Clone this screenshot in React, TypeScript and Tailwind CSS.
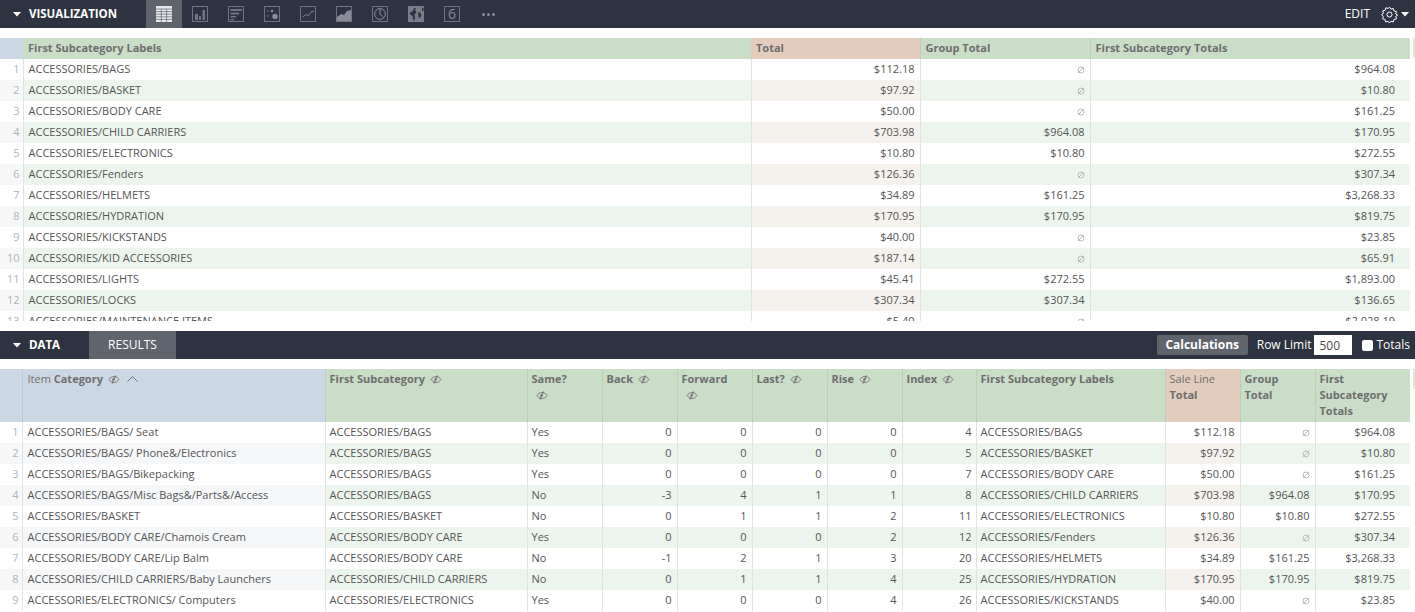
import React from "react";

const N = "∅";
const topRows: string[][] = [
  ["ACCESSORIES/BAGS", "$112.18", N, "$964.08"],
  ["ACCESSORIES/BASKET", "$97.92", N, "$10.80"],
  ["ACCESSORIES/BODY CARE", "$50.00", N, "$161.25"],
  ["ACCESSORIES/CHILD CARRIERS", "$703.98", "$964.08", "$170.95"],
  ["ACCESSORIES/ELECTRONICS", "$10.80", "$10.80", "$272.55"],
  ["ACCESSORIES/Fenders", "$126.36", N, "$307.34"],
  ["ACCESSORIES/HELMETS", "$34.89", "$161.25", "$3,268.33"],
  ["ACCESSORIES/HYDRATION", "$170.95", "$170.95", "$819.75"],
  ["ACCESSORIES/KICKSTANDS", "$40.00", N, "$23.85"],
  ["ACCESSORIES/KID ACCESSORIES", "$187.14", N, "$65.91"],
  ["ACCESSORIES/LIGHTS", "$45.41", "$272.55", "$1,893.00"],
  ["ACCESSORIES/LOCKS", "$307.34", "$307.34", "$136.65"],
  ["ACCESSORIES/MAINTENANCE ITEMS", "$5.40", N, "$2,028.19"],
];

const bottomRows: string[][] = [
  ["ACCESSORIES/BAGS/ Seat", "ACCESSORIES/BAGS", "Yes", "0", "0", "0", "0", "4", "ACCESSORIES/BAGS", "$112.18", N, "$964.08"],
  ["ACCESSORIES/BAGS/ Phone&/Electronics", "ACCESSORIES/BAGS", "Yes", "0", "0", "0", "0", "5", "ACCESSORIES/BASKET", "$97.92", N, "$10.80"],
  ["ACCESSORIES/BAGS/Bikepacking", "ACCESSORIES/BAGS", "Yes", "0", "0", "0", "0", "7", "ACCESSORIES/BODY CARE", "$50.00", N, "$161.25"],
  ["ACCESSORIES/BAGS/Misc Bags&/Parts&/Access", "ACCESSORIES/BAGS", "No", "-3", "4", "1", "1", "8", "ACCESSORIES/CHILD CARRIERS", "$703.98", "$964.08", "$170.95"],
  ["ACCESSORIES/BASKET", "ACCESSORIES/BASKET", "No", "0", "1", "1", "2", "11", "ACCESSORIES/ELECTRONICS", "$10.80", "$10.80", "$272.55"],
  ["ACCESSORIES/BODY CARE/Chamois Cream", "ACCESSORIES/BODY CARE", "Yes", "0", "0", "0", "2", "12", "ACCESSORIES/Fenders", "$126.36", N, "$307.34"],
  ["ACCESSORIES/BODY CARE/Lip Balm", "ACCESSORIES/BODY CARE", "No", "-1", "2", "1", "3", "20", "ACCESSORIES/HELMETS", "$34.89", "$161.25", "$3,268.33"],
  ["ACCESSORIES/CHILD CARRIERS/Baby Launchers", "ACCESSORIES/CHILD CARRIERS", "No", "0", "1", "1", "4", "25", "ACCESSORIES/HYDRATION", "$170.95", "$170.95", "$819.75"],
  ["ACCESSORIES/ELECTRONICS/ Computers", "ACCESSORIES/ELECTRONICS", "Yes", "0", "0", "0", "4", "26", "ACCESSORIES/KICKSTANDS", "$40.00", N, "$23.85"],
];

function NullMark() {
  return (
    <svg width="8" height="8" viewBox="0 0 8 8" className="inline-block align-[-0.5px]" fill="none" stroke="#b5b5b5" strokeWidth="0.9">
      <circle cx="4" cy="4" r="3" />
      <path d="M1.2 6.8 6.8 1.2" />
    </svg>
  );
}

function EyeOff() {
  return (
    <svg width="12" height="9" viewBox="0 0 12 9" className="inline-block ml-[5px] align-[-0.5px]" fill="none" stroke="#777" strokeWidth="0.9">
      <path d="M0.8 4.5C2.4 2.4 4 1.5 6 1.5s3.6.9 5.2 3C9.6 6.6 8 7.5 6 7.5S2.4 6.6.8 4.5Z" />
      <path d="M7.6 0.6 4 8.4" strokeWidth="1.2" />
      <circle cx="5.4" cy="4.4" r="1.2" fill="#777" stroke="none" />
    </svg>
  );
}

function Caret() {
  return (
    <svg width="8" height="5" viewBox="0 0 8 5" className="shrink-0">
      <path d="M0 0h8L4 4.6Z" fill="#fff" />
    </svg>
  );
}

function Cell({ v, right, cls }: { v: string; right?: boolean; cls?: string }) {
  return (
    <td className={`h-[21px] p-0 px-[4px] align-top border-r border-[#dfe3e0] whitespace-nowrap overflow-hidden leading-[20px] ${right ? "text-right pr-[5px]" : "text-left"} ${cls ?? ""}`}>
      {v === N ? <NullMark /> : v}
    </td>
  );
}

const stroke = "#6f737c";
function VisIcons() {
  const box = "w-[16px] h-[16px]";
  return (
    <div className="flex h-full items-center text-[0px]">
      <div className="w-[36px] h-[28px] bg-[#60646d] flex items-center justify-center">
        <svg className={box} viewBox="0 0 16 16">
          <rect width="16" height="16" fill="#e8e9eb" />
          <path d="M0 3h16M0 5.6h16M0 8.2h16M0 10.8h16M0 13.4h16M5.3 3v13M10.6 3v13" stroke="#60646d" strokeWidth="0.7" />
        </svg>
      </div>
      <div className="w-[36px] flex justify-center">
        <svg className={box} viewBox="0 0 16 16" fill="none">
          <rect x="0.5" y="0.5" width="15" height="15" stroke={stroke} />
          <path d="M3 8h3v6H3zM7 10h2v4H7zM10.5 4H13v10h-2.5z" fill="#70747d" />
        </svg>
      </div>
      <div className="w-[36px] flex justify-center">
        <svg className={box} viewBox="0 0 16 16" fill="none">
          <rect x="0.5" y="0.5" width="15" height="15" stroke={stroke} />
          <path d="M2.5 3H14v2H2.5zM2.5 6.5H11v2H2.5zM2.5 10H8v1.6H2.5zM2.5 13H6v1.5H2.5z" fill="#70747d" />
        </svg>
      </div>
      <div className="w-[36px] flex justify-center">
        <svg className={box} viewBox="0 0 16 16" fill="none">
          <rect x="0.5" y="0.5" width="15" height="15" stroke={stroke} />
          <circle cx="11" cy="10.5" r="2.7" fill="#8a8d95" />
          <circle cx="8" cy="5" r="1.3" fill="#8a8d95" />
          <circle cx="4" cy="5" r="0.7" fill="#8a8d95" />
          <circle cx="4" cy="10" r="0.7" fill="#8a8d95" />
        </svg>
      </div>
      <div className="w-[36px] flex justify-center">
        <svg className={box} viewBox="0 0 16 16" fill="none">
          <rect x="0.5" y="0.5" width="15" height="15" stroke={stroke} />
          <path d="M2.5 11 6 8.5 8.5 9.5 11 6l3-1" stroke="#7c8089" />
        </svg>
      </div>
      <div className="w-[36px] flex justify-center">
        <svg className={box} viewBox="0 0 16 16" fill="none">
          <rect x="0.5" y="0.5" width="15" height="15" stroke={stroke} />
          <path d="M1 15v-4l4-3 3 1 3-4 4-1v11Z" fill="#8a8d95" />
        </svg>
      </div>
      <div className="w-[36px] flex justify-center">
        <svg className={box} viewBox="0 0 16 16" fill="none">
          <rect x="0.5" y="0.5" width="15" height="15" stroke={stroke} />
          <circle cx="8" cy="8" r="5.4" stroke="#8a8d95" />
          <path d="M8 2.6V8l3.8 3.8" stroke="#8a8d95" />
        </svg>
      </div>
      <div className="w-[36px] flex justify-center">
        <svg className={box} viewBox="0 0 16 16">
          <rect width="16" height="16" fill="#7a7d85" />
          <path d="M6 2h2l-1 2 1.5 2L6.5 8.5 7 13l-1.5 2L4.5 10 1.5 7.5 3 6l2-1ZM10 6.5h2l1.5 2.5-1 2-1 1.5-1-2ZM14 1.5l1.5.5v3l-1.5.5Z" fill="#2d3340" />
        </svg>
      </div>
      <div className="w-[36px] flex justify-center">
        <div className="w-[16px] h-[16px] border border-[#6f737c] text-[14px] leading-[14px] text-center text-[#868a92] font-normal">6</div>
      </div>
      <div className="w-[36px] flex justify-center gap-[2px]">
        <span className="w-[3px] h-[3px] rounded-full bg-[#8a8d95]" />
        <span className="w-[3px] h-[3px] rounded-full bg-[#8a8d95]" />
        <span className="w-[3px] h-[3px] rounded-full bg-[#8a8d95]" />
      </div>
    </div>
  );
}

function GearIcon() {
  return (
    <svg width="17" height="17" viewBox="0 0 24 24" fill="none" stroke="#fff" strokeWidth="1.4" strokeLinejoin="round">
      <path d="M12 1.5l2 3 3.4-1 .9 3.5 3.5.9-1 3.4 2.7 1.7-2.7 1.7 1 3.4-3.5.9-.9 3.5-3.4-1-2 2.5-2-2.5-3.4 1-.9-3.5-3.5-.9 1-3.4L.7 12l2.7-1.7-1-3.4 3.5-.9.9-3.5 3.4 1Z" />
      <circle cx="12" cy="12" r="3.6" />
    </svg>
  );
}

const topW = [23, 728, 169, 170, 320];
const botW = [22, 303, 202, 75, 75, 75, 75, 75, 74, 189, 75, 75, 95];
const green = "bg-[#c9ddc7]";
const sep = "border-r border-[#b9cfb8]";

function Hdr({ children, bg = green, cls = "" }: { children?: React.ReactNode; bg?: string; cls?: string }) {
  return (
    <th className={`${bg} ${sep} ${cls} align-top text-left font-normal text-[#6e6e6e] p-0 px-[4px] leading-[16px] whitespace-normal`}>
      {children}
    </th>
  );
}

export default function App() {
  return (
    <div className="w-[1415px] h-[612px] overflow-hidden bg-white text-[11px] text-[#555555] font-['Open_Sans',sans-serif]">
      <div className="h-[28px] bg-[#2d3340] flex items-center text-white">
        <div className="flex items-center w-[146px] pl-[13px] gap-[8px] font-bold text-[11.5px]">
          <Caret />
          <span>VISUALIZATION</span>
        </div>
        <VisIcons />
        <div className="ml-auto flex items-center pr-[6px] text-[12px]">
          <span className="mr-[11px]">EDIT</span>
          <GearIcon />
          <span className="ml-[3px]"><Caret /></span>
        </div>
      </div>

      <div className="h-[283px] mt-[10px] overflow-hidden relative">
        <table className="table-fixed border-collapse w-[1410px]">
          <colgroup>{topW.map((w, i) => <col key={i} style={{ width: w }} />)}</colgroup>
          <thead>
            <tr className="h-[21px]">
              <th className="bg-[#cbd8e3] p-0" />
              <Hdr bg={green} cls="!border-r-0 !pl-[5px] !leading-[20px]"><b className="font-bold">First Subcategory Labels</b></Hdr>
              <Hdr bg="bg-[#e3ccbb]" cls="!pl-[5px] !leading-[20px]"><b className="font-bold">Total</b></Hdr>
              <Hdr cls="!pl-[5px] !leading-[20px]"><b className="font-bold">Group Total</b></Hdr>
              <Hdr cls="!pl-[5px] !leading-[20px] !border-r-0"><b className="font-bold">First Subcategory Totals</b></Hdr>
            </tr>
          </thead>
          <tbody>
            {topRows.map((r, i) => {
              const even = i % 2 === 1;
              return (
                <tr key={i}>
                  <td className={`h-[21px] p-0 pr-[3px] align-top text-right leading-[20px] text-[#b3b3b3] border-r border-[#dfe3e0] ${even ? "bg-[#f5f7f8]" : ""}`}>{i + 1}</td>
                  <Cell v={r[0]} cls={`!pl-[5px] ${even ? "bg-[#ecf5ed]" : ""}`} />
                  <Cell v={r[1]} right cls={even ? "bg-[#f5f1ed]" : ""} />
                  <Cell v={r[2]} right cls={even ? "bg-[#ecf5ed]" : ""} />
                  <Cell v={r[3]} right cls={`!border-r-0 pr-[15px] ${even ? "bg-[#ecf5ed]" : ""}`} />
                </tr>
              );
            })}
          </tbody>
        </table>
        <div className="absolute right-0 top-0 w-[2px] h-[20px] bg-[#e2e2e2]" />
      </div>

      <div className="h-[28px] mt-[10px] bg-[#2d3340] flex items-center text-white">
        <div className="flex items-center w-[89px] pl-[13px] gap-[8px] font-bold text-[11.5px]">
          <Caret />
          <span>DATA</span>
        </div>
        <div className="w-[87px] h-full bg-[#60646d] flex items-center justify-center text-[12px]">RESULTS</div>
        <div className="ml-auto flex items-center pr-[5px] text-[12px]">
          <div className="h-[20px] w-[91px] rounded-[2px] bg-[#60646d] flex items-center justify-center font-bold">Calculations</div>
          <span className="ml-[9px]">Row Limit</span>
          <div className="ml-[3px] w-[38px] h-[20px] bg-white text-[#4c4c4c] pl-[5px] leading-[21px]">500</div>
          <span className="ml-[10px] w-[11px] h-[11px] rounded-[2px] bg-white" />
          <span className="ml-[3px]">Totals</span>
        </div>
      </div>

      <div className="mt-[10px] overflow-hidden h-[243px] relative">
        <table className="table-fixed border-collapse w-[1410px]">
          <colgroup>{botW.map((w, i) => <col key={i} style={{ width: w }} />)}</colgroup>
          <thead>
            <tr className="h-[53px]">
              <th className="bg-[#cbd8e3] p-0 border-r border-[#bccad6]" />
              <Hdr bg="bg-[#cbd8e3]" cls="!border-r-[#bccad6] !pl-[5px]">
                <span className="block mt-[2px]">Item <b className="font-bold">Category</b><EyeOff />
                  <svg width="11" height="6" viewBox="0 0 11 6" fill="none" stroke="#6a6a6a" strokeWidth="0.9" className="inline-block ml-[7px] align-[1px]"><path d="M0.5 5.5 5.5 0.7l5 4.8" /></svg>
                </span>
              </Hdr>
              <Hdr><span className="block mt-[2px]"><b className="font-bold">First Subcategory</b><EyeOff /></span></Hdr>
              <Hdr><span className="block mt-[2px]"><b className="font-bold">Same?</b><br /><span className="-ml-[1px]"><EyeOff /></span></span></Hdr>
              <Hdr><span className="block mt-[2px]"><b className="font-bold">Back</b><EyeOff /></span></Hdr>
              <Hdr><span className="block mt-[2px]"><b className="font-bold">Forward</b><br /><span className="-ml-[1px]"><EyeOff /></span></span></Hdr>
              <Hdr><span className="block mt-[2px]"><b className="font-bold">Last?</b><EyeOff /></span></Hdr>
              <Hdr><span className="block mt-[2px]"><b className="font-bold">Rise</b><EyeOff /></span></Hdr>
              <Hdr><span className="block mt-[2px]"><b className="font-bold">Index</b><EyeOff /></span></Hdr>
              <Hdr><span className="block mt-[2px]"><b className="font-bold">First Subcategory Labels</b></span></Hdr>
              <Hdr bg="bg-[#e3ccbb]"><span className="block mt-[2px]">Sale Line<br /><b className="font-bold">Total</b></span></Hdr>
              <Hdr><span className="block mt-[2px]"><b className="font-bold">Group<br />Total</b></span></Hdr>
              <Hdr cls="!border-r-0"><span className="block mt-[2px]"><b className="font-bold">First<br />Subcategory<br />Totals</b></span></Hdr>
            </tr>
          </thead>
          <tbody>
            {bottomRows.map((r, i) => {
              const even = i % 2 === 1;
              const g = even ? "bg-[#ecf5ed]" : "";
              return (
                <tr key={i}>
                  <td className={`h-[21px] p-0 pr-[3px] align-top text-right leading-[20px] text-[#b3b3b3] border-r border-[#dfe3e0] ${even ? "bg-[#f5f7f8]" : ""}`}>{i + 1}</td>
                  <Cell v={r[0]} cls={`!pl-[5px] ${even ? "bg-[#f5f7f8]" : ""}`} />
                  <Cell v={r[1]} cls={g} />
                  <Cell v={r[2]} cls={g} />
                  <Cell v={r[3]} right cls={g} />
                  <Cell v={r[4]} right cls={g} />
                  <Cell v={r[5]} right cls={g} />
                  <Cell v={r[6]} right cls={g} />
                  <Cell v={r[7]} right cls={`!pr-[4px] ${g}`} />
                  <Cell v={r[8]} cls={g} />
                  <Cell v={r[9]} right cls={even ? "bg-[#f5f1ed]" : ""} />
                  <Cell v={r[10]} right cls={g} />
                  <Cell v={r[11]} right cls={`!border-r-0 pr-[15px] ${g}`} />
                </tr>
              );
            })}
          </tbody>
        </table>
        <div className="absolute right-0 top-0 w-[2px] h-[20px] bg-[#e2e2e2]" />
      </div>
    </div>
  );
}
